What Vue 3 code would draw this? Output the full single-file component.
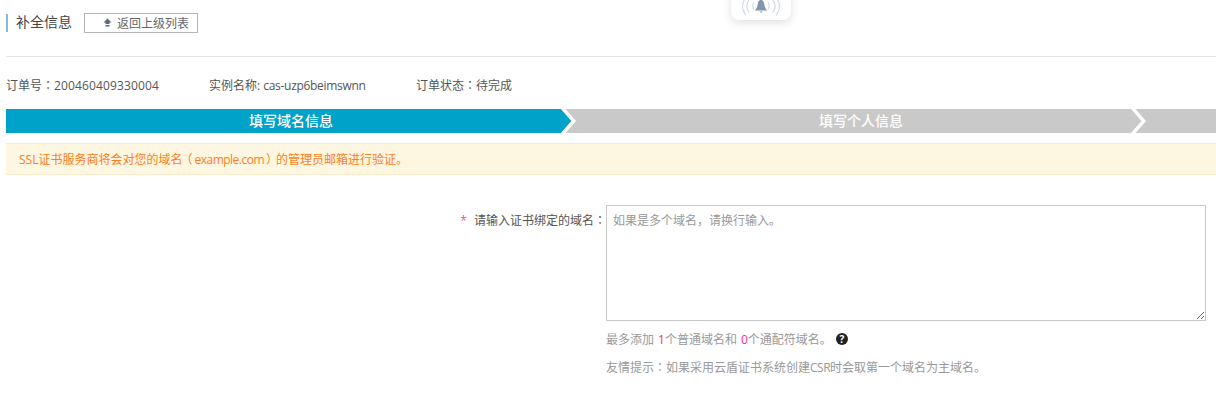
<script setup>
</script>

<template>
  <div class="page">
    <div class="notify" aria-hidden="true">
      <svg width="40" height="15" viewBox="0 0 40 15">
        <g fill="none" stroke="#d3dbe5" stroke-width="1.2" stroke-linecap="round">
          <path d="M4.500 -3 Q-1.500 5 4.500 14" />
          <path d="M8 -1 Q3.500 5 8 11" />
          <path d="M12.500 2 Q11 5 12.500 8" />
          <path d="M35.500 -3 Q41.500 5 35.500 14" />
          <path d="M32 -1 Q36.500 5 32 11" />
          <path d="M27.500 2 Q29 5 27.500 8" />
        </g>
        <path d="M20 -1 C17.500 -1 17 1.500 16.600 4 C16.200 6.500 15 8 14 9.500 L26 9.500 C25 8 23.800 6.500 23.400 4 C23 1.500 22.500 -1 20 -1 Z" fill="#8296ad" />
        <rect x="18.800" y="10.500" width="2.400" height="1" fill="#8296ad" />
      </svg>
    </div>

    <header class="head">
      <h2 class="title">补全信息</h2>
      <button class="back" type="button">
        <svg width="9" height="9" viewBox="0 0 9 9">
          <path d="M4.500 0.500 L8.500 4.500 L6.500 4.500 L6.500 6 L2.500 6 L2.500 4.500 L0.500 4.500 Z" fill="#5f6b78" />
          <rect x="2.500" y="7" width="4" height="1.500" fill="#5f6b78" />
        </svg>
        <span>返回上级列表</span>
      </button>
    </header>

    <div class="info">
      <span class="order">订单号<b>：</b><span class="digits">200460409330004</span></span>
      <span class="instance">实例名称: <span class="tight">cas-uzp6beimswnn</span></span>
      <span>订单状态<b>：</b>待完成</span>
    </div>

    <div class="steps">
      <div class="step active"><span>填写域名信息</span></div>
      <div class="step"><span>填写个人信息</span></div>
    </div>

    <div class="alert">SSL证书服务商将会对您的域名<b class="open">（</b><span class="tighter">example.com</span><b class="close">）</b>的管理员邮箱进行验证。</div>

    <div class="form">
      <label class="label"><i>*</i>请输入证书绑定的域名<b>：</b></label>
      <div class="field">
        <textarea class="input" placeholder="如果是多个域名，请换行输入。"></textarea>
        <p class="hint first">最多添加<em>1</em>个普通域名和<em class="pink">0</em>个通配符域名。<span class="help">?</span></p>
        <p class="hint second">友情提示<b>：</b>如果采用云盾证书系统创建<span class="tighter">CSR</span>时会取第一个域名为主域名。</p>
      </div>
    </div>
  </div>
</template>

<style scoped>
.page {
  position: relative;
  width: 1216px;
  height: 414px;
  overflow: hidden;
  padding-left: 6px;
  box-sizing: border-box;
  background: #fff;
  color: #555;
  font-family: "Open Sans", "Noto Sans CJK SC", sans-serif;
  font-size: 12px;
}
b {
  font-family: "Noto Sans CJK TC", sans-serif;
  font-weight: 400;
  line-height: 1;
}
b.open {
  margin: 0 2px 0 -2px;
}
b.close {
  margin: 0 -2px 0 2px;
}
.digits {
  letter-spacing: 0.13px;
}
.tight {
  letter-spacing: -0.3px;
}
.tighter {
  letter-spacing: -0.5px;
}
.notify {
  position: absolute;
  left: 731px;
  top: -10px;
  width: 60px;
  height: 30px;
  background: #fff;
  border-radius: 8px;
  box-shadow: 0 3px 8px rgba(60, 70, 90, 0.16);
  display: flex;
  justify-content: center;
  align-items: flex-end;
  padding-bottom: 4px;
  box-sizing: border-box;
}
.notify svg {
  overflow: visible;
}
.head {
  display: flex;
  align-items: center;
  height: 57px;
  box-sizing: border-box;
  padding-bottom: 11px;
  border-bottom: 1px solid #e3e5e9;
}
.title {
  margin: 0;
  height: 18px;
  line-height: 16px;
  padding-left: 8px;
  border-left: 2px solid #88b7e0;
  font-size: 14px;
  font-weight: 400;
  color: #444;
}
.back {
  margin-left: 12px;
  width: 114px;
  height: 20px;
  padding: 0 0 0 18px;
  display: flex;
  align-items: center;
  gap: 5px;
  box-sizing: border-box;
  border: 1px solid #b4b4b4;
  background: #fff;
  color: #666;
  font: inherit;
}
.info {
  display: flex;
  margin-top: 20px;
  height: 18px;
  line-height: 18px;
  white-space: nowrap;
}
.order {
  width: 203px;
}
.instance {
  width: 207px;
}
.steps {
  display: flex;
  margin-top: 14px;
  width: 1210px;
  height: 24px;
  overflow: hidden;
  background: #c9c9c9;
}
.step {
  position: relative;
  flex: 0 0 570px;
  height: 24px;
  line-height: 24px;
  text-align: center;
  color: #fff;
  font-size: 14px;
  font-weight: 500;
}
.step span {
  position: relative;
  z-index: 2;
}
.step.active::before {
  content: "";
  position: absolute;
  inset: 0;
  background: #00a2ca;
  clip-path: polygon(0 0, 555px 0, 565.500px 50%, 555px 100%, 0 100%);
}
.step::after {
  content: "";
  position: absolute;
  top: 0;
  right: 0;
  width: 15px;
  height: 24px;
  background: #fff;
  clip-path: polygon(0 0, 4.500px 0, 15px 50%, 4.500px 100%, 0 100%, 10.500px 50%);
}
.alert {
  margin-top: 10px;
  width: 1210px;
  height: 32px;
  padding: 1px 0 0 13px;
  box-sizing: border-box;
  line-height: 30px;
  background: #fdf6e0;
  border: 1px solid #faebcc;
  border-width: 1px 0;
  color: #ff7e22;
}
.form {
  display: flex;
  margin-top: 30px;
}
.label {
  width: 600px;
  text-align: right;
  padding-top: 8px;
  line-height: 16px;
  white-space: nowrap;
  box-sizing: border-box;
}
.label i {
  margin-right: 7px;
  color: #ff4d88;
  font-style: normal;
}
.field {
  width: 600px;
}
.input {
  display: block;
  width: 600px;
  height: 116px;
  padding: 6px;
  box-sizing: border-box;
  border: 1px solid #c9c9c9;
  outline: none;
  font: inherit;
  line-height: 18px;
  color: #555;
  resize: vertical;
}
.input::placeholder {
  color: #999;
  opacity: 1;
}
.hint {
  margin: 0;
  color: #999;
  line-height: 18px;
  white-space: nowrap;
}
.hint.first {
  margin-top: 10px;
}
.hint.second {
  margin-top: 10px;
}
.hint em {
  font-style: normal;
  color: #e4393c;
  margin-left: 4px;
}
.hint em.pink {
  color: #ff2d87;
}
.help {
  display: inline-block;
  width: 12px;
  height: 12px;
  margin-left: 4px;
  border-radius: 50%;
  background: #222;
  color: #fff;
  font-size: 10px;
  font-weight: 700;
  line-height: 12px;
  text-align: center;
  vertical-align: 1px;
}
</style>
